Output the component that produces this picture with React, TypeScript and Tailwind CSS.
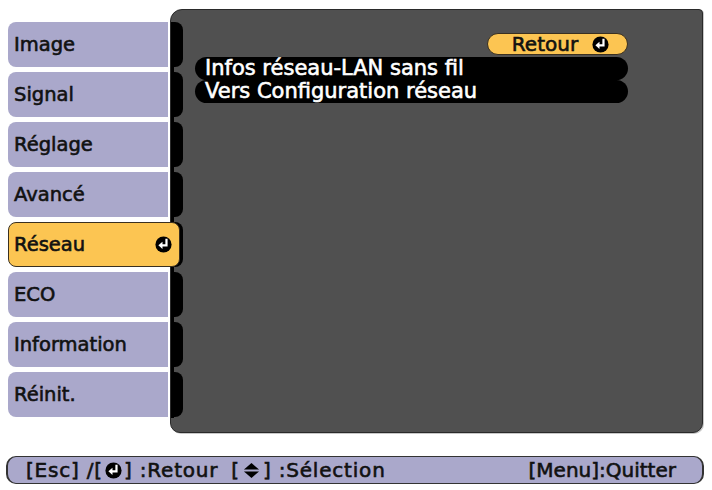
import React from "react";

const FONT = "font-['DejaVu_Sans',sans-serif] [-webkit-text-stroke:0.6px]";

const tabs = ["Image", "Signal", "Réglage", "Avancé", "Réseau", "ECO", "Information", "Réinit."];
const items = ["Infos réseau-LAN sans fil", "Vers Configuration réseau"];

function EnterIcon({ size = 17 }: { size?: number }) {
  return (
    <svg width={size} height={size} viewBox="0 0 20 20" className="shrink-0">
      <circle cx="10" cy="10" r="9.5" fill="#000" />
      <path d="M13.5 4.5 V11 H8" stroke="#fff" strokeWidth="2.6" fill="none" strokeLinecap="square" />
      <path d="M4 11 L8.8 6.8 L8.8 15.2 Z" fill="#fff" />
    </svg>
  );
}

function UpDownIcon() {
  return (
    <svg width="17" height="17" viewBox="0 0 18 18" className="shrink-0">
      <path d="M9 1 L17 8 L1 8 Z" fill="#000" />
      <path d="M1 10 L17 10 L9 17 Z" fill="#000" />
    </svg>
  );
}

export default function App() {
  return (
    <div className={`w-[712px] h-[490px] bg-white overflow-hidden ${FONT}`}>
      <div className="flex pt-[9px] pl-2">
        {/* Left menu tabs */}
        <div className="mt-[13px] w-[160px] flex flex-col gap-[5px]">
          {tabs.map((t) =>
            t === "Réseau" ? (
              <div
                key={t}
                className="relative z-10 w-[172px] h-[45px] bg-[#fcc552] border border-[#3a3020] rounded-[8px] flex items-center justify-between pl-[5px] pr-[7px] text-[19.5px] text-[#111]"
              >
                <span>{t}</span>
                <EnterIcon />
              </div>
            ) : (
              <div
                key={t}
                className="h-[45px] bg-[#aaa8cb] rounded-l-[8px] flex items-center pl-[6px] text-[19.5px] text-[#111]"
              >
                {t}
              </div>
            )
          )}
        </div>

        {/* Main panel */}
        <div className="ml-[2px] w-[533px] h-[424px] bg-[#505050] rounded-tl-[12px] rounded-tr-[4px] rounded-b-[10px] border border-[#2a2a2a] shadow-[1px_1px_0_#c8c8c8] flex">
          <div className="mt-[12px] h-[396px] flex flex-col gap-[5px] border-l-[3px] border-black">
            {tabs.map((t) => (
              <div key={t} className="w-[9px] h-[45px] bg-black rounded-r-[8px]" />
            ))}
          </div>
          <div className="ml-[12px] w-[433px] pt-[23px] flex flex-col">
            <div className="self-end w-[141px] h-[22px] bg-[#fcc552] border border-[#3a3020] rounded-full flex items-center justify-center gap-[14px] pl-[6px] text-[20px] text-[#111]">
              <span className="leading-none">Retour</span>
              <EnterIcon size={17} />
            </div>
            <div className="mt-[2px] flex flex-col">
              {items.map((it) => (
                <div
                  key={it}
                  className="h-[23px] bg-black rounded-full flex items-center pl-[10px] text-[21px] text-white leading-none"
                >
                  {it}
                </div>
              ))}
            </div>
          </div>
        </div>
      </div>

      {/* Bottom help bar */}
      <div className="mt-[23px] ml-[6px] w-[698px] h-[28px] bg-[#aaa8cb] border border-[#333] border-x-2 rounded-[10px] flex items-center justify-between pl-[18px] pr-[26px] text-[20px] text-[#111]">
        <div className="flex items-center tracking-[0.8px]">
          <span>[Esc] /[</span>
          <span className="mx-[2px]"><EnterIcon /></span>
          <span>] :Retour</span>
          <span className="ml-[13px]">[</span>
          <span className="mx-[3px]"><UpDownIcon /></span>
          <span>] :Sélection</span>
        </div>
        <span>[Menu]:Quitter</span>
      </div>
    </div>
  );
}
